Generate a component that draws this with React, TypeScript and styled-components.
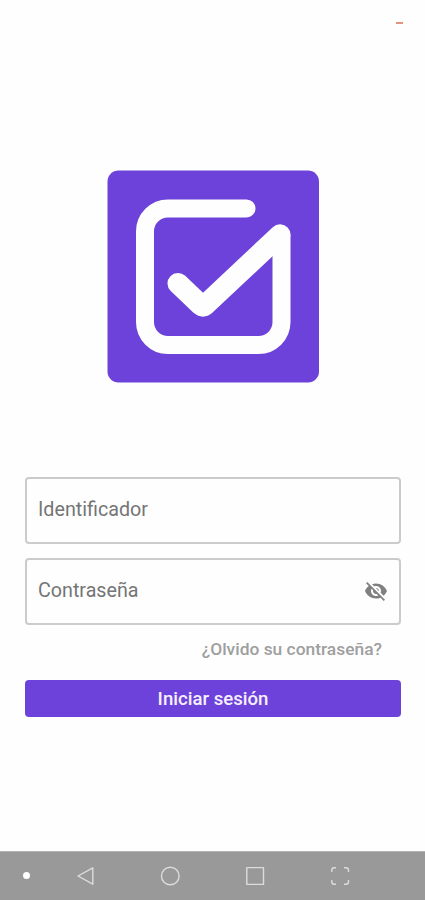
import React from 'react';
import styled, { createGlobalStyle } from 'styled-components';

const GlobalStyle = createGlobalStyle`
  * { box-sizing: border-box; }
  body { margin: 0; background: #fefefe; }
`;

const Screen = styled.div`
  width: 100%;
  max-width: 425px;
  height: 900px;
  display: flex;
  flex-direction: column;
  background: #fefefe;
  font-family: Roboto, sans-serif;
  overflow: hidden;
`;

const StatusBar = styled.header`
  height: 170px;
  display: flex;
  justify-content: flex-end;
  padding: 22px 22px 0 0;
`;

const StatusMark = styled.span`
  width: 7px;
  height: 2px;
  background: #e0957c;
`;

const Logo = styled.svg`
  display: block;
  width: 213px;
  height: 213px;
  margin-left: 107px;
`;

const Form = styled.form`
  display: flex;
  flex-direction: column;
  margin: 94px 24px 0 25px;
`;

const Field = styled.label`
  height: 67px;
  display: flex;
  align-items: center;
  justify-content: space-between;
  padding: 0 11px 1px 11px;
  margin-bottom: 14px;
  border: 2px solid #cbcbcb;
  border-radius: 4px;
  color: #757575;
  font-size: 19.7px;
  line-height: 24px;
`;

const HiddenEye = styled.svg`
  width: 24px;
  height: 24px;
  margin-bottom: 1px;
  fill: #808080;
`;

const ForgotLink = styled.a`
  align-self: flex-end;
  margin-right: 19px;
  height: 20px;
  color: #9f9f9f;
  font-size: 17.4px;
  font-weight: 500;
  line-height: 20px;
  white-space: nowrap;
`;

const SubmitButton = styled.button`
  height: 37px;
  margin-top: 21px;
  padding: 2px 0 0;
  border: 0;
  border-radius: 4px;
  background: #6d42da;
  color: #f6f0ff;
  font: 500 18.6px/35px Roboto, sans-serif;
`;

const NavBar = styled.nav`
  height: 49px;
  margin-top: auto;
  display: flex;
  align-items: center;
  padding-left: 22px;
  border-top: 1px solid #b4b4b4;
  background: #999;
`;

const NavIcon = styled.svg<{ $gap?: number }>`
  width: 20px;
  height: 20px;
  margin-left: ${({ $gap = 65 }) => $gap}px;
  fill: none;
  stroke: #dcdcdc;
  stroke-width: 1.4;
  stroke-linejoin: round;
`;

const NavDot = styled.span`
  width: 7px;
  height: 7px;
  margin: 0 0 1px 1px;
  border-radius: 50%;
  background: #fff;
`;

export default function App() {
  return (
    <Screen>
      <GlobalStyle />
      <StatusBar>
        <StatusMark />
      </StatusBar>
      <Logo viewBox="107 170 213 213" aria-hidden="true">
        <rect x="107.5" y="170.5" width="211.5" height="212" rx="11" fill="#6d42da" />
        <g fill="none" stroke="#fefefe" strokeLinecap="round" strokeLinejoin="round">
          <path
            strokeWidth="18"
            d="M246.5 208.4H168A23 23 0 0 0 145 231.4V322A23 23 0 0 0 168 345H258.5A23 23 0 0 0 281.5 322V236"
          />
          <path strokeWidth="21" d="M178 283.4L201 305.3Q203 307.1 205 305.3L280 234.8" />
        </g>
      </Logo>
      <Form>
        <Field>
          <span>Identificador</span>
        </Field>
        <Field>
          <span>Contraseña</span>
          <HiddenEye viewBox="0 0 24 24" aria-hidden="true">
            <path d="M12 7c2.76 0 5 2.24 5 5 0 .65-.13 1.26-.36 1.83l2.92 2.92c1.51-1.26 2.7-2.89 3.43-4.75-1.73-4.39-6-7.5-11-7.5-1.4 0-2.74.25-3.98.7l2.16 2.16C10.74 7.13 11.35 7 12 7zM2 4.27l2.28 2.28.46.46C3.08 8.3 1.78 10.02 1 12c1.73 4.39 6 7.5 11 7.5 1.55 0 3.03-.3 4.38-.84l.42.42L19.73 22 21 20.73 3.27 3 2 4.27zM7.53 9.8l1.55 1.55c-.05.21-.08.43-.08.65 0 1.66 1.34 3 3 3 .22 0 .44-.03.65-.08l1.55 1.55c-.67.33-1.41.53-2.2.53-2.76 0-5-2.24-5-5 0-.79.2-1.53.53-2.2zm4.31-.78l3.15 3.15.02-.16c0-1.66-1.34-3-3-3l-.17.01z" />
          </HiddenEye>
        </Field>
        <ForgotLink>¿Olvido su contraseña?</ForgotLink>
        <SubmitButton type="button">Iniciar sesión</SubmitButton>
      </Form>
      <NavBar>
        <NavDot />
        <NavIcon $gap={45} viewBox="0 0 20 20">
          <path d="M17.8 1.8V18.2L3 10Z" />
        </NavIcon>
        <NavIcon viewBox="0 0 20 20">
          <circle cx="10.3" cy="10" r="8.8" />
        </NavIcon>
        <NavIcon viewBox="0 0 20 20">
          <rect x="1.8" y="1.6" width="16.7" height="16.8" />
        </NavIcon>
        <NavIcon viewBox="0 0 20 20">
          <path d="M1.8 6V4.2Q1.8 1.8 4.2 1.8H6M14 1.8H16Q18.5 1.8 18.5 4.2V6M18.5 14V15.8Q18.5 18.3 16 18.3H14M6 18.3H4.2Q1.8 18.3 1.8 15.8V14" />
        </NavIcon>
      </NavBar>
    </Screen>
  );
}
